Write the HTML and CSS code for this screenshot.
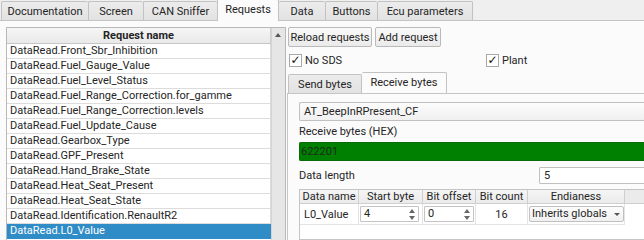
FILE: index.html
```html
<!DOCTYPE html>
<html>
<head>
<meta charset="utf-8">
<link rel="stylesheet" href="styles.css">
</head>
<body>
<div class="win">
  <div class="tabbar">
    <div class="tab t-doc">Documentation</div>
    <div class="tab t-scr">Screen</div>
    <div class="tab t-can">CAN Sniffer</div>
    <div class="tab t-req sel">Requests</div>
    <div class="tab t-data">Data</div>
    <div class="tab t-btn">Buttons</div>
    <div class="tab t-ecu">Ecu parameters</div>
  </div>
  <div class="page">
    <div class="listbox">
      <div class="listmain">
        <div class="lhead">Request name</div>
        <div class="row">DataRead.Front_Sbr_Inhibition</div>
        <div class="row">DataRead.Fuel_Gauge_Value</div>
        <div class="row">DataRead.Fuel_Level_Status</div>
        <div class="row">DataRead.Fuel_Range_Correction.for_gamme</div>
        <div class="row">DataRead.Fuel_Range_Correction.levels</div>
        <div class="row">DataRead.Fuel_Update_Cause</div>
        <div class="row">DataRead.Gearbox_Type</div>
        <div class="row">DataRead.GPF_Present</div>
        <div class="row">DataRead.Hand_Brake_State</div>
        <div class="row">DataRead.Heat_Seat_Present</div>
        <div class="row">DataRead.Heat_Seat_State</div>
        <div class="row">DataRead.Identification.RenaultR2</div>
        <div class="row selrow">DataRead.L0_Value</div>
      </div>
      <div class="vscroll"><div class="uparrow"></div></div>
    </div>
    <div class="right">
      <div class="btnrow">
        <div class="btn">Reload requests</div>
        <div class="btn">Add request</div>
      </div>
      <div class="checks">
        <div class="chk"><span class="box">✓</span>No SDS</div>
        <div class="chk"><span class="box">✓</span>Plant</div>
      </div>
      <div class="subtabs">
        <div class="stab">Send bytes</div>
        <div class="stab ssel">Receive bytes</div>
      </div>
      <div class="subpanel">
        <div class="combo">AT_BeepInRPresent_CF</div>
        <div class="lbl">Receive bytes (HEX)</div>
        <div class="hex">622201</div>
        <div class="dlrow">
          <div class="lbl2">Data length</div>
          <div class="input">5</div>
        </div>
        <div class="table">
          <div class="thead">
            <div class="th c1">Data name</div>
            <div class="th c2">Start byte</div>
            <div class="th c3">Bit offset</div>
            <div class="th c4">Bit count</div>
            <div class="th c5">Endianess</div>
            <div class="th cfill"></div>
          </div>
          <div class="trow">
            <div class="td c1 tl">L0_Value</div>
            <div class="td c2"><div class="spin">4<span class="arrows"><i class="up"></i><i class="dn"></i></span></div></div>
            <div class="td c3"><div class="spin sp2">0<span class="arrows"><i class="up"></i><i class="dn"></i></span></div></div>
            <div class="td c4 tc">16</div>
            <div class="td c5"><div class="ecombo">Inherits globals<span class="caret"></span></div></div>
          </div>
        </div>
      </div>
    </div>
  </div>
</div>
</body>
</html>
```
FILE: styles.css
```css
* { box-sizing: border-box; }
html, body { margin: 0; padding: 0; }
body {
  width: 644px; height: 240px; overflow: hidden;
  font-family: Roboto, "Noto Sans", sans-serif;
  font-size: 11px; color: #252525;
  background: #efefef;
}
.win { width: 644px; height: 240px; display: flex; flex-direction: column; }
.tabbar {
  height: 21px; display: flex; align-items: flex-end; padding-left: 1px;
  border-bottom: 1px solid #c4c4c4; flex: none;
}
.tab {
  height: 19px; display: flex; align-items: center; justify-content: center; white-space: nowrap;
  background: linear-gradient(#ececec, #e2e2e2);
  border: 1px solid #c2c2c2; border-bottom: none; border-right: none;
  border-radius: 2px 2px 0 0;
}
.tab.t-ecu { border-right: 1px solid #c2c2c2; }
.t-doc { width: 87px; }
.t-scr { width: 55px; }
.t-can { width: 74px; }
.t-req { width: 62px; }
.t-data { width: 46px; }
.t-btn { width: 52px; }
.t-ecu { width: 96px; }
.tab.sel {
  height: 22px; background: #fbfbfb; margin-bottom: -1px; align-items: flex-start; padding-top: 3px;
  border-right: 1px solid #c2c2c2;
}
.tab.sel + .tab { border-left: none; }
.page {
  flex: 1; background: #fbfbfb; display: flex; padding: 6px 0 0 6px; overflow: hidden;
}
.listbox {
  width: 280px; flex: none; display: flex; border: 1px solid #b8b8b8; border-bottom: none;
  background: #fff; height: 230px;
}
.listmain { flex: 1; display: flex; flex-direction: column; }
.lhead {
  height: 16px; font-weight: bold; text-align: center; line-height: 15px;
  background: linear-gradient(#f6f6f6, #e9e9e9); border-bottom: 1px solid #c6c6c6;
  border-right: 1px solid #d0d0d0;
}
.row {
  height: 15px; line-height: 14px; padding-left: 3px; border-bottom: 1px solid #dcdcdc;
  border-right: 1px solid #dcdcdc; white-space: nowrap;
}
.row.selrow { background: #308cc6; color: #fff; border-color: #308cc6; }
.vscroll {
  width: 14px; flex: none; background: #e6e6e6; border-left: 1px solid #d4d4d4; position: relative;
}
.uparrow {
  position: absolute; left: 3px; top: 5px; width: 0; height: 0;
  border-left: 3.5px solid transparent; border-right: 3.5px solid transparent;
  border-bottom: 4px solid #555;
}
.right { flex: 1; margin-left: 2px; display: flex; flex-direction: column; min-width: 0; }
.btnrow { display: flex; gap: 3px; height: 20px; }
.btn {
  height: 20px; width: 84px; display: flex; align-items: center; justify-content: center;
  border: 1px solid #bababa; border-radius: 2px; background: linear-gradient(#fafafa, #eaeaea);
  white-space: nowrap;
}
.btn + .btn { width: 66px; }
.checks { display: grid; grid-template-columns: 197px 1fr; margin-top: 6px; height: 14px; }
.chk { display: flex; align-items: center; padding-left: 1px; }
.box {
  width: 13px; height: 13px; border: 1px solid #a8a8a8; background: #fff; margin-right: 3px;
  display: flex; align-items: center; justify-content: center; font-size: 12px; line-height: 1;
  color: #111; font-family: "DejaVu Sans", sans-serif;
}
.subtabs { display: flex; align-items: flex-end; margin-top: 5px; height: 21px; }
.stab {
  height: 19px; display: flex; align-items: center; white-space: nowrap;
  border: 1px solid #c2c2c2; border-bottom: none; border-radius: 2px 2px 0 0;
  background: linear-gradient(#ececec, #e2e2e2); width: 74px; justify-content: center;
}
.stab.ssel {
  height: 22px; background: #fbfbfb; border-left: none; margin-bottom: -1px; width: 85px;
  align-items: flex-start; padding-top: 3px;
}
.subpanel {
  flex: 1; border-top: 1px solid #c6c6c6; border-left: 1px solid #c6c6c6;
  padding: 8px 0 0 11px; display: flex; flex-direction: column; margin-left: -1px;
}
.combo {
  height: 19px; border: 1px solid #c0c0c0; border-right: none; border-radius: 2px 0 0 2px;
  background: linear-gradient(#fcfcfc, #f0f0f0);
  padding-left: 4px; display: flex; align-items: center; margin-right: -10px;
}
.lbl { height: 21px; display: flex; align-items: center; }
.hex {
  height: 19px; background: #008000; color: #1b2a1b; border-radius: 2px 0 0 2px; padding-left: 1px;
  line-height: 18px; margin-right: -10px; border: 1px solid #0a6a0a; border-right: none;
}
.dlrow { display: flex; align-items: center; height: 17px; margin-top: 6px; }
.lbl2 { width: 240px; flex: none; }
.input {
  flex: 1; height: 17px; border: 1px solid #c0c0c0; border-right: none; border-radius: 2px 0 0 2px; background: #fff;
  padding-left: 4px; line-height: 15px; margin-right: -10px;
}
.table { margin-top: 5px; background: #fff; border: 1px solid #c4c4c4; border-right: none; flex: 1; margin-right: -10px; }
.thead { display: flex; height: 14px; }
.th {
  height: 14px; line-height: 13px; text-align: center; border-right: 1px solid #cfcfcf; border-bottom: 1px solid #cfcfcf;
  background: linear-gradient(#f5f5f5, #ebebeb); flex: none; white-space: nowrap;
}
.th.cfill { flex: 1; border-right: none; background: #ebebeb; }
.c1 { width: 59px; }
.c2 { width: 64px; }
.c3 { width: 53px; }
.c4 { width: 52px; }
.c5 { width: 97px; }
.trow { display: flex; height: 21px; }
.td { height: 21px; display: flex; align-items: center; border-right: 1px solid #e4e4e4; border-bottom: 1px solid #e4e4e4; flex: none; }
.tl { padding-left: 4px; }
.tc { justify-content: center; }
.spin {
  margin-left: 1px; width: 59px; height: 16px; border: 1px solid #c4c4c4; background: #fff; border-radius: 1px;
  padding-left: 3px; line-height: 14px; position: relative;
}
.spin.sp2 { width: 50px; }
.arrows { position: absolute; right: 2px; top: 1px; width: 7px; height: 12px; }
.arrows i { position: absolute; left: 0; width: 0; height: 0; border-left: 3.5px solid transparent; border-right: 3.5px solid transparent; }
.arrows .up { top: 1px; border-bottom: 4px solid #666; }
.arrows .dn { bottom: 0; border-top: 4px solid #666; }
.ecombo {
  margin-left: 1px; width: 95px; height: 16px; border: 1px solid #c0c0c0; border-radius: 2px;
  background: linear-gradient(#fcfcfc, #f0f0f0); padding-left: 2px; line-height: 14px; position: relative; white-space: nowrap;
}
.caret { position: absolute; right: 3px; top: 6px; width: 0; height: 0; border-left: 3px solid transparent; border-right: 3px solid transparent; border-top: 3px solid #555; }
```
